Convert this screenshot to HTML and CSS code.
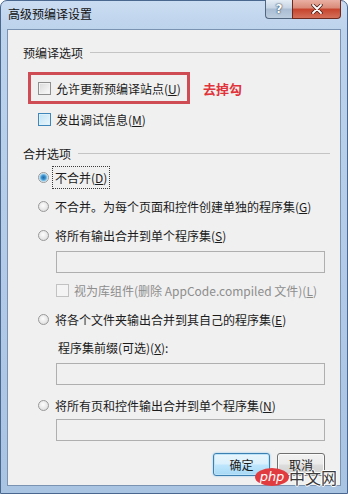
FILE: index.html
```html
<!DOCTYPE html>
<html lang="zh-CN">
<head>
    <meta charset="UTF-8">
    <title>高级预编译设置</title>
    <link rel="stylesheet" href="styles.css">
</head>
<body>

<div class="window">
    <!-- title bar -->
    <div class="titlebar">
        <span class="title">高级预编译设置</span>
        <div class="caption">
            <span class="cap-btn help">?</span>
            <span class="cap-btn close">
                <svg width="12" height="10" viewBox="0 0 12 10">
                    <path d="M2 1 L10 9 M10 1 L2 9" stroke="#4a1a12" stroke-width="3.4" stroke-linecap="round"/>
                    <path d="M2 1 L10 9 M10 1 L2 9" stroke="#fff" stroke-width="1.8" stroke-linecap="round"/>
                </svg>
            </span>
        </div>
    </div>

    <div class="client">
        <!-- precompile options -->
        <div class="group-head"><span>预编译选项</span><i class="rule"></i></div>

        <div class="mark-row">
            <div class="mark-box">
                <label class="opt"><span class="check"></span>允许更新预编译站点(<u>U</u>)</label>
            </div>
            <span class="note">去掉勾</span>
        </div>

        <label class="opt indent1 row-cb2"><span class="check hot"></span>发出调试信息(<u>M</u>)</label>

        <!-- merge options -->
        <div class="group-head head2"><span>合并选项</span><i class="rule"></i></div>

        <label class="opt indent1 row-r1"><span class="radio on"></span><span class="focus">不合并(<u>D</u>)</span></label>
        <label class="opt indent1 row-r2"><span class="radio"></span>不合并。为每个页面和控件创建单独的程序集(<u>G</u>)</label>
        <label class="opt indent1 row-r3"><span class="radio"></span>将所有输出合并到单个程序集(<u>S</u>)</label>
        <div class="field row-f1"></div>
        <label class="opt indent2 disabled row-cb3"><span class="check off"></span>视为库组件(删除 AppCode.compiled 文件)(<u>L</u>)</label>

        <label class="opt indent1 row-r4"><span class="radio"></span>将各个文件夹输出合并到其自己的程序集(<u>E</u>)</label>
        <div class="prefix">程序集前缀(可选)(<u>X</u>):</div>
        <div class="field row-f2"></div>

        <label class="opt indent1 row-r5"><span class="radio"></span>将所有页和控件输出合并到单个程序集(<u>N</u>)</label>
        <div class="field row-f3"></div>

        <div class="actions">
            <button class="btn default">确定</button>
            <button class="btn cancel">取消</button>
        </div>
    </div>

    <!-- site watermark -->
    <div class="watermark">
        <span class="wm-php">php</span>
        <span class="wm-cn">中文网</span>
    </div>
</div>

</body>
</html>
```

FILE: styles.css
```css
* {
    box-sizing: border-box;
}

body {
    margin: 0;
    width: 348px;
    height: 494px;
    overflow: hidden;
    font-family: "Noto Sans CJK SC", "Noto Sans", sans-serif;
    font-size: 12px;
    color: #1b1b1b;
    background: #fff;
}

u {
    text-decoration: underline;
    text-underline-offset: 1px;
}

/* window frame */
.window {
    position: relative;
    width: 348px;
    height: 494px;
    border: 1px solid #4a6790;
    border-radius: 7px 7px 0 0;
    background: linear-gradient(180deg, #cadcf1 0, #bdd3ec 28px, #a9c3e3 100%);
    padding: 0 6px 7px;
    display: flex;
    flex-direction: column;
}

.titlebar {
    height: 28px;
    display: flex;
    justify-content: space-between;
    align-items: flex-start;
}

.title {
    padding: 5px 0 0 1px;
    line-height: 16px;
    color: #111;
}

.caption {
    display: flex;
    margin-top: -1px;
}

.cap-btn {
    height: 19px;
    display: flex;
    align-items: center;
    justify-content: center;
    border: 1px solid #52677f;
    border-top: none;
}

.help {
    width: 27px;
    border-right: none;
    border-radius: 0 0 0 4px;
    background: linear-gradient(180deg, #e4ecf5 0, #c6d4e4 45%, #a9bcd2 50%, #bccddf 100%);
    color: #fff;
    font-family: "DejaVu Sans", sans-serif;
    font-weight: bold;
    font-size: 12px;
    text-shadow: 0 0 2px #2d4057, 0 0 1px #2d4057;
}

.close {
    width: 49px;
    border-color: #6e2a1e;
    border-radius: 0 0 4px 0;
    background: linear-gradient(180deg, #e9b0a3 0, #d98a78 45%, #c6432c 50%, #d4705a 100%);
}

/* client area */
.client {
    flex: 1;
    border: 1px solid #7b93b3;
    background: #f0f0f0;
    display: flex;
    flex-direction: column;
}

.group-head {
    display: flex;
    align-items: center;
    height: 20px;
    margin: 12px 10px 0 15px;
}

.group-head .rule {
    flex: 1;
    height: 1px;
    margin-left: 7px;
    background: #c4c4c4;
}

.head2 {
    margin-top: 14px;
}

.mark-row {
    display: flex;
    align-items: center;
    height: 32px;
    margin: 10px 0 0 20px;
}

.mark-box {
    width: 162px;
    height: 32px;
    border: 3px solid #cf4c55;
    padding-left: 7px;
    display: flex;
    align-items: center;
}

.note {
    margin-left: 13px;
    color: #e0333a;
    font-weight: bold;
    font-size: 13px;
}

.opt {
    display: flex;
    align-items: center;
    height: 20px;
    white-space: nowrap;
}

.indent1 {
    margin-left: 30px;
}

.indent2 {
    margin-left: 48px;
}

.check {
    width: 13px;
    height: 13px;
    margin-right: 5px;
    border: 1px solid #8f8f8f;
    background: linear-gradient(135deg, #d9d9d9, #fbfbfb);
    box-shadow: inset 0 0 0 1px #f2f2f2;
}

.check.hot {
    border-color: #3f86bb;
    background: linear-gradient(135deg, #c0e3f5, #eaf6fc);
    box-shadow: inset 0 0 0 1px #def1fa;
}

.check.off {
    border-color: #c2c2c2;
    background: #f4f4f4;
    box-shadow: none;
}

.disabled {
    color: #8d8d8d;
}

.radio {
    width: 11px;
    height: 11px;
    margin-right: 6px;
    border-radius: 50%;
    border: 1px solid #999;
    background: radial-gradient(circle at 45% 40%, #fdfdfd 0, #e6e6e6 60%, #cfcfcf 100%);
}

.radio.on {
    margin-right: 3px;
    background: radial-gradient(circle at 50% 50%, #1d6aa8 0, #3b8fcc 2px, #8fcbec 3.5px, #e8f3f9 4.5px, #d6d6d6 100%);
}

.focus {
    display: flex;
    align-items: center;
    height: 23px;
    padding: 0 2px;
    border: 1px dotted #3a3a3a;
}

.row-cb2 { margin-top: 5px; }
.row-r1 { margin-top: 3px; height: 23px; }
.row-r2 { margin-top: 7px; }
.row-r3 { margin-top: 9px; }
.row-f1 { margin-top: 6px; }
.row-cb3 { margin-top: 7px; }
.row-r4 { margin-top: 9px; }
.row-f2 { margin-top: 5px; }
.row-r5 { margin-top: 10px; }
.row-f3 { margin-top: 4px; }

.prefix {
    height: 20px;
    line-height: 20px;
    margin: 9px 0 0 50px;
}

.field {
    width: 269px;
    height: 22px;
    margin-left: 48px;
    border: 1px solid #afafaf;
    background: #f0f0f0;
}

/* dialog buttons */
.actions {
    display: flex;
    justify-content: flex-end;
    gap: 7px;
    margin: 12px 15px 0 0;
}

.btn {
    height: 23px;
    padding: 0;
    font-family: inherit;
    font-size: 12px;
    color: #1b1b1b;
    border-radius: 3px;
}

.btn.default {
    width: 57px;
    border: 1px solid #3c7fb1;
    background: linear-gradient(180deg, #eaf6fd 0, #d9f0fc 48%, #bee6fd 52%, #a7d9f5 100%);
    box-shadow: inset 0 0 0 1px #bde3f8, 0 0 2px #7ec3ea;
}

.btn.cancel {
    width: 48px;
    border: 1px solid #707070;
    background: linear-gradient(180deg, #f2f2f2 0, #ebebeb 48%, #dddddd 52%, #cfcfcf 100%);
    box-shadow: inset 0 0 0 1px #fbfbfb;
}

/* watermark overlay */
.watermark {
    position: absolute;
    left: 254px;
    top: 467px;
    display: flex;
    align-items: center;
}

.wm-php {
    width: 34px;
    height: 18px;
    border-radius: 50%;
    background: #e23b3f;
    color: #fff;
    font-family: "DejaVu Sans", sans-serif;
    font-style: italic;
    font-size: 13px;
    line-height: 17px;
    text-align: center;
}

.wm-cn {
    margin-left: 0;
    font-size: 16px;
    line-height: 18px;
    color: #3a3a3a;
    text-shadow: 1px 0 0 #fff, -1px 0 0 #fff, 0 1px 0 #fff, 0 -1px 0 #fff;
}
```
